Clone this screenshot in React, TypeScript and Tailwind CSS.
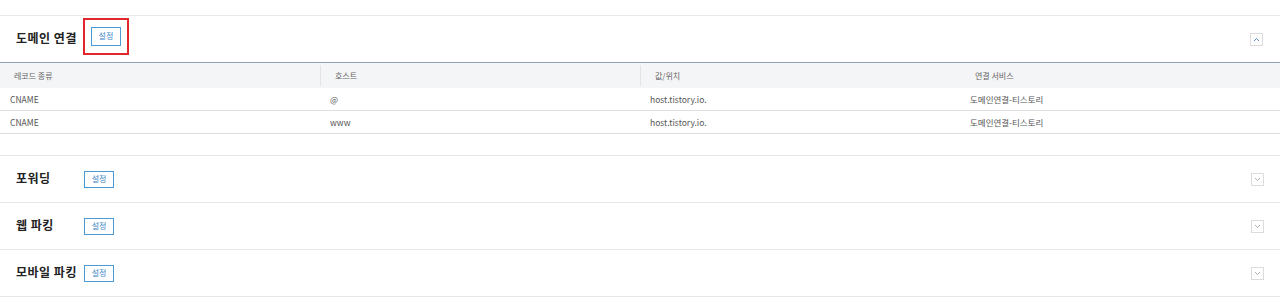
import { ReactNode } from "react";

const font = { fontFamily: '"Noto Sans CJK KR", "Noto Sans", sans-serif' };

const rows = [
  { type: "CNAME", host: "@", value: "host.tistory.io.", service: "도메인연결-티스토리" },
  { type: "CNAME", host: "www", value: "host.tistory.io.", service: "도메인연결-티스토리" },
];

const SetButton = ({ big }: { big?: boolean }) => (
  <span
    className={`flex items-center justify-center border border-[#4b9ad6] text-[#3a86c6] text-[8px] bg-white ${
      big ? "w-[30px] h-[19px]" : "w-[30px] h-[17px]"
    }`}
  >
    설정
  </span>
);

const Chevron = ({ open }: { open?: boolean }) => (
  <span className="flex items-center justify-center w-[13px] h-[13px] border border-[#dcdcdc] bg-white">
    <svg width="7" height="5" viewBox="0 0 7 5">
      <path
        d={open ? "M1 4 L3.5 1.5 L6 4" : "M1 1 L3.5 3.5 L6 1"}
        fill="none"
        stroke={open ? "#5b87c0" : "#b0b0b0"}
        strokeWidth="1"
      />
    </svg>
  </span>
);

const Section = ({ title, children }: { title: string; children?: ReactNode }) => (
  <div className="border-b border-[#e6e6e6]">
    <div className="h-[46px] flex items-center pl-[16px] pr-[16px]">
      <div className="w-[68px] text-[12px] font-bold text-[#222] leading-none -mt-[2px] tracking-[0.5px]">{title}</div>
      <SetButton />
      <div className="flex-1" />
      <Chevron />
    </div>
    {children}
  </div>
);

export default function App() {
  return (
    <div className="w-[1280px] h-[299px] bg-white overflow-hidden" style={font}>
      <div className="h-[16px] border-b border-[#e9e9e9]" />

      <div className="border-b border-[#e6e6e6]">
        <div className="h-[46px] flex items-center pl-[16px] pr-[17px]">
          <div className="text-[12px] font-bold text-[#222] leading-none -mt-[3px] tracking-[0.5px]">도메인 연결</div>
          <div className="ml-[6px] w-[46px] h-[37px] border-2 border-[#e1262c] flex items-center justify-center -mt-[6px]">
            <SetButton big />
          </div>
          <div className="flex-1" />
          <Chevron open />
        </div>

        <div className="border-t border-[#8fa0b8]">
          <div className="grid grid-cols-4 h-[25px] bg-[#f4f5f6] text-[8px] text-[#666]">
            <div className="flex items-center pl-[14px]">레코드 종류</div>
            <div className="flex items-center pl-[14px] border-l border-[#e4e4e4] my-[2px]">호스트</div>
            <div className="flex items-center pl-[14px] border-l border-[#e4e4e4] my-[2px]">값/위치</div>
            <div className="flex items-center pl-[15px]">연결 서비스</div>
          </div>
          {rows.map((r, i) => (
            <div
              key={i}
              className="grid grid-cols-4 h-[23px] border-b border-[#dedede] text-[8.5px] text-[#555]"
            >
              <div className="flex items-center pl-[10px]">{r.type}</div>
              <div className="flex items-center pl-[10px]">{r.host}</div>
              <div className="flex items-center pl-[10px]">{r.value}</div>
              <div className="flex items-center pl-[10px]">{r.service}</div>
            </div>
          ))}
          <div className="h-[21px]" />
        </div>
      </div>

      <Section title="포워딩" />
      <Section title="웹 파킹" />
      <Section title="모바일 파킹" />
    </div>
  );
}
